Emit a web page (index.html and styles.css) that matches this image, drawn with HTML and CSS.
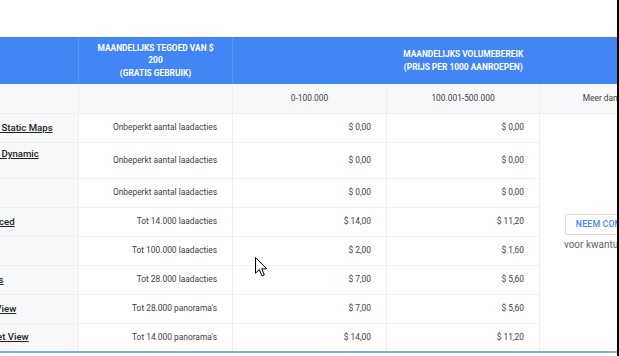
FILE: index.html
```html
<!DOCTYPE html>
<html lang="nl">
<head>
<meta charset="utf-8">
<title>Prijzen</title>
<link rel="stylesheet" href="styles.css">
</head>
<body>
<div class="page">
  <div class="viewport">
    <div class="scroller">
      <table class="pricing">
        <colgroup>
          <col class="c-product">
          <col class="c-credit">
          <col class="c-tier">
          <col class="c-tier2">
          <col class="c-tier">
        </colgroup>
        <thead>
          <tr class="head-main">
            <th></th>
            <th>Maandelijks tegoed van $<br>200<br>(gratis gebruik)</th>
            <th colspan="3">Maandelijks volumebereik<br>(prijs per 1000 aanroepen)</th>
          </tr>
          <tr class="head-sub">
            <th></th>
            <th></th>
            <th>0-100.000</th>
            <th>100.001-500.000</th>
            <th>Meer dan 500.000</th>
          </tr>
        </thead>
        <tbody>
          <tr>
            <td class="product"><a href="#">Mobile Native Static Maps</a></td>
            <td>Onbeperkt aantal laadacties</td>
            <td>$ 0,00</td>
            <td>$ 0,00</td>
            <td class="contact" rowspan="8">
              <a class="btn" href="#">Neem contact op</a>
              <div class="note">voor kwantumkortingen</div>
            </td>
          </tr>
          <tr class="tall">
            <td class="product"><a href="#">Mobile Native Dynamic Maps</a></td>
            <td>Onbeperkt aantal laadacties</td>
            <td>$ 0,00</td>
            <td>$ 0,00</td>
          </tr>
          <tr>
            <td class="product"><a href="#">Embed</a></td>
            <td>Onbeperkt aantal laadacties</td>
            <td>$ 0,00</td>
            <td>$ 0,00</td>
          </tr>
          <tr>
            <td class="product"><a href="#">Embed Advanced</a></td>
            <td>Tot 14.000 laadacties</td>
            <td>$ 14,00</td>
            <td>$ 11,20</td>
          </tr>
          <tr>
            <td class="product"><a href="#">Static Maps</a></td>
            <td>Tot 100.000 laadacties</td>
            <td>$ 2,00</td>
            <td>$ 1,60</td>
          </tr>
          <tr>
            <td class="product"><a href="#">Dynamic Maps</a></td>
            <td>Tot 28.000 laadacties</td>
            <td>$ 7,00</td>
            <td>$ 5,60</td>
          </tr>
          <tr>
            <td class="product"><a href="#">Static Street View</a></td>
            <td>Tot 28.000 panorama's</td>
            <td>$ 7,00</td>
            <td>$ 5,60</td>
          </tr>
          <tr class="last">
            <td class="product"><a href="#">Dynamic Street View</a></td>
            <td>Tot 14.000 panorama's</td>
            <td>$ 14,00</td>
            <td>$ 11,20</td>
          </tr>
        </tbody>
      </table>
    </div>
  </div>
  <div class="edge"></div>
  <svg class="cursor" width="14" height="21" viewBox="0 0 14 21" aria-hidden="true">
    <path d="M0.5 0.5 L0.5 16.2 L4.3 12.6 L6.9 18.8 L9.3 17.8 L6.8 11.8 L11.8 11.8 Z" fill="#fff" stroke="#000" stroke-width="1" stroke-linejoin="round"/>
  </svg>
</div>
</body>
</html>
```

FILE: styles.css
```css
* { box-sizing: border-box; }

html, body {
  margin: 0;
  padding: 0;
  background: #fff;
}

body {
  font-family: Roboto, "Noto Sans", "Liberation Sans", sans-serif;
  color: #3c4043;
}

.page {
  position: relative;
  display: flex;
  width: 619px;
  height: 356px;
  overflow: hidden;
}

.viewport {
  flex: 0 0 617px;
  overflow: hidden;
  padding-top: 37px;
}

.edge {
  flex: 0 0 2px;
  background: #000;
}

.scroller {
  margin-left: -72px;
}

.pricing {
  border-collapse: collapse;
  table-layout: fixed;
  width: 765px;
  font-size: 8.4px;
}

.c-product { width: 150px; }
.c-credit { width: 154px; }
.c-tier { width: 154px; }
.c-tier2 { width: 153px; }

.head-main th {
  height: 47px;
  padding: 4px 10px;
  background: #4285f4;
  color: #fff;
  font-weight: 700;
  line-height: 12.6px;
  text-transform: uppercase;
  text-align: center;
  border-left: 1px solid #5e97f3;
}

.head-main th:first-child { border-left: 0; }

.head-sub th {
  height: 29px;
  padding: 0 10px;
  background: #f8f9fa;
  font-weight: 400;
  text-align: center;
  color: #3c4043;
  border: 1px solid #eef0f2;
  border-top: 0;
}

.pricing tbody tr { height: 29px; }
.pricing tbody tr.tall { height: 36px; }

.pricing td {
  padding: 5px 15px;
  line-height: 17px;
  text-align: right;
  vertical-align: middle;
  border: 1px solid #eef0f2;
}

.pricing tr.last td,
.pricing td.contact { border-bottom: 2px solid #7faaf0; }

.pricing td.product {
  text-align: left;
  padding: 5px 14px 5px 11px;
  line-height: 12px;
  background: #f8f9fa;
  font-size: 9.6px;
  font-weight: 500;
}

.product a {
  color: #202124;
  text-decoration: underline;
}

.pricing td.contact {
  text-align: center;
  background: #fff;
  padding: 0 6px;
}

.btn {
  display: inline-block;
  padding: 0 10px;
  height: 21px;
  line-height: 19px;
  border: 1px solid #dadce0;
  border-radius: 2px;
  color: #4285f4;
  font-weight: 500;
  font-size: 8.7px;
  text-transform: uppercase;
  text-decoration: none;
  letter-spacing: 0.2px;
}

.note {
  margin-top: 3px;
  line-height: 13px;
  font-size: 10px;
  color: #5f6368;
}

.cursor {
  position: absolute;
  left: 255px;
  top: 257px;
}
```
